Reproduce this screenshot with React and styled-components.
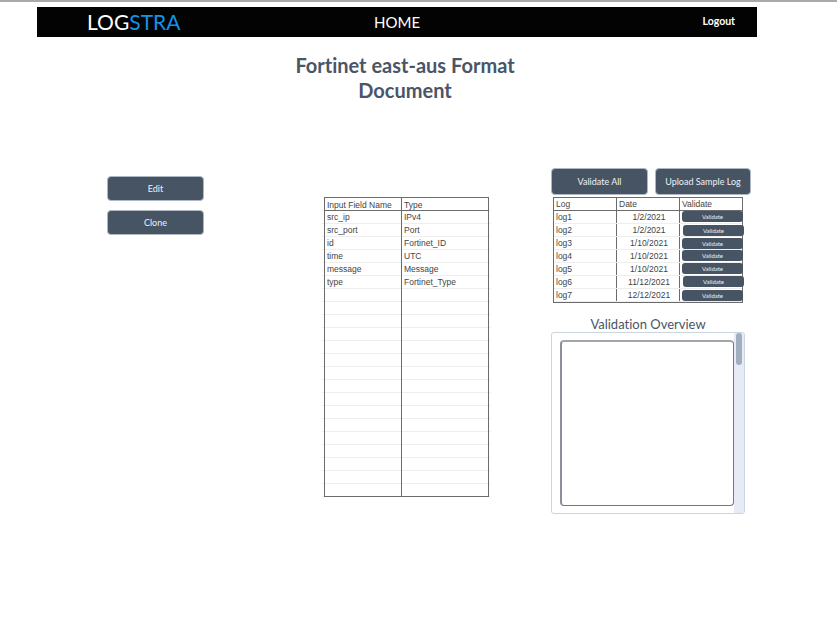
import React from 'react';
import styled, { createGlobalStyle } from 'styled-components';

const GlobalStyle = createGlobalStyle`
  html, body {
    margin: 0;
    padding: 0;
    background: #fff;
    font-family: Lato, "Liberation Sans", sans-serif;
    font-variant-ligatures: none;
  }
`;

const Page = styled.div`
  width: 837px;
  height: 642px;
  box-sizing: border-box;
  border-top: 2px solid #a9a9a9;
  padding-top: 5px;
  overflow: hidden;
  opacity: 0.995;
`;

const Nav = styled.nav`
  width: 720px;
  height: 30px;
  margin-left: 37px;
  background: #030303;
  display: grid;
  grid-template-columns: 50px 287px 1fr auto 22px;
  align-items: center;
  color: #fff;
`;

const Logo = styled.div`
  grid-column: 2;
  font-size: 21px;
  font-weight: 400;
  line-height: 30px;
  span { color: #0f94e8; }
`;

const Home = styled.div`
  grid-column: 3;
  font-size: 15px;
`;

const Logout = styled.div`
  grid-column: 4;
  font-size: 10.5px;
  font-weight: 700;
  margin-top: -3px;
`;

const Title = styled.h1`
  width: 240px;
  margin: 16px 0 0 285px;
  font-size: 20px;
  line-height: 25px;
  font-weight: 700;
  text-align: center;
  color: #4a5568;
`;

const Columns = styled.div`
  display: grid;
  grid-template-columns: 97px 120px 165px 62px 200px;
  margin: 65px 0 0 107px;
  align-items: start;
`;

const LeftCol = styled.div`
  grid-column: 1;
  display: flex;
  flex-direction: column;
  gap: 9px;
  margin-top: 8px;
`;

const Button = styled.button`
  display: block;
  box-sizing: border-box;
  width: ${p => p.$w || 97}px;
  height: ${p => p.$h || 25}px;
  padding: 0;
  border: 1px solid #aeb8c4;
  border-radius: 4px;
  background: #475464;
  color: #edf2f7;
  font-family: Lato, sans-serif;
  font-size: 9px;
`;

const Sheet = styled.div`
  grid-column: 3;
  margin-top: 29px;
  width: 165px;
  font-family: "Liberation Sans", sans-serif;
  font-size: 8.5px;
  color: #444;
`;

const SheetRow = styled.div`
  display: grid;
  grid-template-columns: 77px 88px;
  height: ${p => p.$head ? 14 : 13}px;
  margin: 0 -2px;
  padding: 0 2px;
  box-sizing: border-box;
  border-bottom: 1px solid #eee;
`;

const SheetCell = styled.div`
  position: relative;
  box-sizing: border-box;
  height: ${p => p.$head ? 14 : 13}px;
  padding-left: 2px;
  line-height: ${p => p.$head ? 14 : 12}px;
  white-space: nowrap;
  border-left: 1px solid #6b6b6b;
  border-right: ${p => p.$last ? '1px solid #6b6b6b' : '0'};
  border-top: ${p => p.$head ? '1px solid #6b6b6b' : '0'};
  border-bottom: ${p => p.$dark ? '1px solid #6b6b6b' : '0'};
`;

const RightCol = styled.div`
  grid-column: 5;
`;

const ActionRow = styled.div`
  display: flex;
  gap: 7px;
`;

const LogTable = styled.div`
  width: 190px;
  margin: 2px 0 0 2px;
  font-family: "Liberation Sans", sans-serif;
  font-size: 8.5px;
  color: #444;
  border-left: 1px solid #6b6b6b;
  border-right: 1px solid #6b6b6b;
  border-bottom: 1px solid #6b6b6b;
  box-sizing: border-box;
`;

const LogRow = styled.div`
  display: grid;
  grid-template-columns: 63px 63px 1fr;
  height: ${p => p.$head ? 14 : 13}px;
  box-sizing: border-box;
  border-top: ${p => p.$head ? '1px solid #6b6b6b' : '0'};
  border-bottom: 1px solid ${p => p.$head ? '#6b6b6b' : '#eee'};
  line-height: 12px;
`;

const LogCell = styled.div`
  box-sizing: border-box;
  padding-left: ${p => p.$flush ? 0 : 2}px;
  text-align: ${p => p.$center ? 'center' : 'left'};
  border-right: ${p => p.$line ? '1px solid #6b6b6b' : '0'};
`;

const RowButton = styled.button`
  display: block;
  box-sizing: border-box;
  width: 61px;
  height: 11px;
  margin: ${p => p.$y}px 0 0 ${p => p.$x}px;
  padding: 0;
  border: 0;
  border-radius: 3px;
  background: #475464;
  color: #edf2f7;
  font-family: Lato, sans-serif;
  font-size: 6px;
  overflow: hidden;
`;

const RowLabel = styled.span`
  display: block;
  height: ${p => p.$clip ? 4 : 11}px;
  line-height: ${p => p.$clip ? 4 : 11}px;
  overflow: hidden;
`;

const OverviewTitle = styled.div`
  width: 194px;
  margin-top: 13px;
  font-size: 13px;
  line-height: 16px;
  text-align: center;
  color: #4a5568;
`;

const Overview = styled.div`
  display: flex;
  width: 194px;
  height: 182px;
  box-sizing: border-box;
  border: 1px solid #cbd5e0;
  border-radius: 3px;
  overflow: hidden;
`;

const OverviewBody = styled.div`
  flex: 1;
  padding: 7px 0 7px 8px;
`;

const OutputBox = styled.div`
  width: 174px;
  height: 166px;
  box-sizing: border-box;
  border: 1px solid #767676;
  border-top: 2px solid #a0a5ae;
  border-left: 2px solid #8a8f99;
  border-radius: 4px;
  background: #fff;
`;

const Track = styled.div`
  width: 10px;
  background: #e8ebf6;
  padding: 0 2px;
  box-sizing: border-box;
`;

const Thumb = styled.div`
  width: 6px;
  height: 32px;
  border-radius: 3px;
  background: #a0aec0;
`;

const fields = [
  ['Input Field Name', 'Type'],
  ['src_ip', 'IPv4'],
  ['src_port', 'Port'],
  ['id', 'Fortinet_ID'],
  ['time', 'UTC'],
  ['message', 'Message'],
  ['type', 'Fortinet_Type'],
  ...Array.from({ length: 16 }, () => ['', '']),
];

const logs = [
  { name: 'log1', date: '1/2/2021', x: 2, y: 0 },
  { name: 'log2', date: '1/2/2021', x: 3, y: 1 },
  { name: 'log3', date: '1/10/2021', x: 2, y: 1 },
  { name: 'log4', date: '1/10/2021', x: 2, y: 0 },
  { name: 'log5', date: '1/10/2021', x: 2, y: 0 },
  { name: 'log6', date: '11/12/2021', x: 3, y: 0, clip: true },
  { name: 'log7', date: '12/12/2021', x: 2, y: 1 },
];

const App = () => (
  <Page>
    <GlobalStyle />
    <Nav>
      <Logo>LOG<span>STRA</span></Logo>
      <Home>HOME</Home>
      <Logout>Logout</Logout>
    </Nav>
    <Title>Fortinet east-aus Format Document</Title>
    <Columns>
      <LeftCol>
        <Button>Edit</Button>
        <Button>Clone</Button>
      </LeftCol>
      <Sheet>
        {fields.map((row, i) => {
          const head = i === 0;
          const dark = head || i === fields.length - 1;
          return (
            <SheetRow key={i} $head={head}>
              <SheetCell $head={head} $dark={dark}>{row[0]}</SheetCell>
              <SheetCell $head={head} $dark={dark} $last>{row[1]}</SheetCell>
            </SheetRow>
          );
        })}
      </Sheet>
      <RightCol>
        <ActionRow>
          <Button $h={27}>Validate All</Button>
          <Button $w={96} $h={27}>Upload Sample Log</Button>
        </ActionRow>
        <LogTable>
          <LogRow $head>
            <LogCell $line>Log</LogCell>
            <LogCell $line>Date</LogCell>
            <LogCell>Validate</LogCell>
          </LogRow>
          {logs.map(log => (
            <LogRow key={log.name}>
              <LogCell $line>{log.name}</LogCell>
              <LogCell $line $center>{log.date}</LogCell>
              <LogCell $flush>
                <RowButton $x={log.x} $y={log.y}>
                  <RowLabel $clip={log.clip}>Validate</RowLabel>
                </RowButton>
              </LogCell>
            </LogRow>
          ))}
        </LogTable>
        <OverviewTitle>Validation Overview</OverviewTitle>
        <Overview>
          <OverviewBody>
            <OutputBox />
          </OverviewBody>
          <Track>
            <Thumb />
          </Track>
        </Overview>
      </RightCol>
    </Columns>
  </Page>
);

export default App;
